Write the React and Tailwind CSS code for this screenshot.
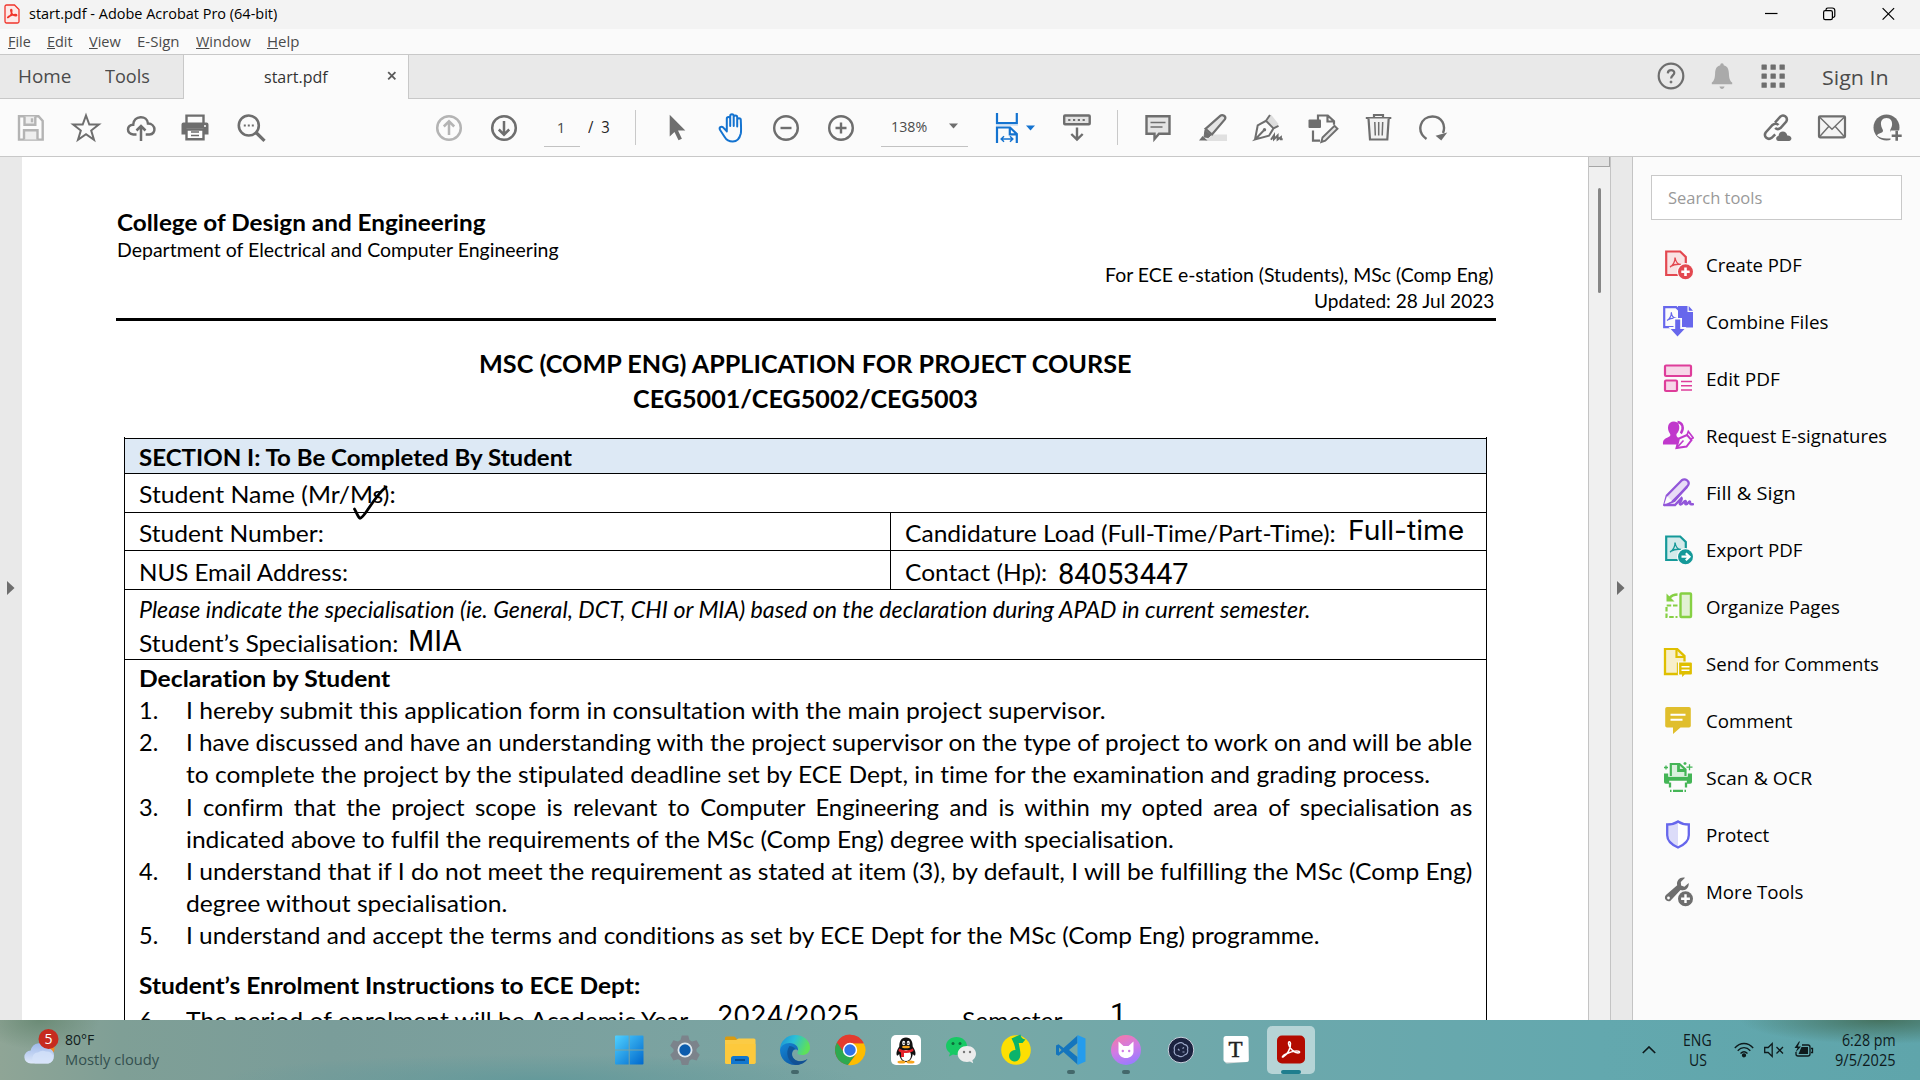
import React, { useLayoutEffect, useRef, useState } from "react";

/* Stretches one line of text to the width of its box. */
function Fit({ className = "", children }) {
  const outer = useRef(null);
  const inner = useRef(null);
  const [scale, setScale] = useState(1);
  useLayoutEffect(() => {
    const w = outer.current.getBoundingClientRect().width;
    const n = inner.current.offsetWidth;
    if (n) setScale(w / n);
  }, []);
  return (
    <span ref={outer} className={"block shrink-0 whitespace-nowrap text-left " + className}>
      <span ref={inner} className="inline-block origin-left" style={{ transform: `scaleX(${scale})` }}>
        {children}
      </span>
    </span>
  );
}

const G = "#6e6e6e";

function Ic({ children, size = 32, className = "", ...rest }) {
  return (
    <svg width={size} height={size} viewBox="0 0 32 32" fill="none" stroke={G} strokeWidth="2.2" className={"shrink-0 " + className} {...rest}>
      {children}
    </svg>
  );
}

function Slot({ children, className = "w-[55px]" }) {
  return <div className={"flex shrink-0 items-center justify-center " + className}>{children}</div>;
}

/* ---------- Window chrome ---------- */

function TitleBar() {
  return (
    <div className="flex h-[29px] shrink-0 items-center bg-[#f3f3f3]">
      <svg width="16" height="20" viewBox="0 0 16 20" className="mb-0.5 ml-1" fill="none" stroke="#f0352b">
        <path d="M2.5 1h8L15 5.5v12a1.5 1.5 0 0 1-1.5 1.5h-11A1.5 1.5 0 0 1 1 17.500v-15A1.500 1.500 0 0 1 2.500 1Z" strokeWidth="1.300" fill="#fde9e8" />
        <path d="M4 13.500c2-1 4-4 3.800-7-.1-1.400-1.200-1.200-1 .1.400 2.400 2.400 4.800 4.800 5.200 1.500.1 1.400-1.300-.2-1.300-2.400 0-4.600.8-6.800 2-.9.600-1.200 1.300-.6 1Z" strokeWidth="1.500" />
      </svg>
      <Fit className="mb-0.5 ml-[9px] w-[248px] text-[15px] leading-[27px] text-black">start.pdf - Adobe Acrobat Pro (64-bit)</Fit>
      <div className="ml-auto flex items-center pr-[25px] pb-0.5">
        <svg width="130" height="14" viewBox="0 0 130 14" fill="none" stroke="#000" strokeWidth="1.200">
          <path d="M0 6.500h12.500" />
          <rect x="58.600" y="3.600" width="8.800" height="9" rx="1.600" />
          <path d="M61 3.400V2.800A1.800 1.800 0 0 1 62.800 1h4.400a2.600 2.600 0 0 1 2.600 2.600v5a1.800 1.800 0 0 1-1.800 1.800" />
          <path d="M117.600 1.200l11.500 11.500M129.100 1.200L117.600 12.700" />
        </svg>
      </div>
    </div>
  );
}

function MenuBar() {
  return (
    <div className="flex h-[25px] shrink-0 items-center bg-[#fafafa] text-[15px] leading-[25px] text-[#4a4a4a]">
      <Fit className="ml-2 w-[23px]"><u>F</u>ile</Fit>
      <Fit className="ml-4 w-[26px]"><u>E</u>dit</Fit>
      <Fit className="ml-4 w-8"><u>V</u>iew</Fit>
      <Fit className="ml-4 w-[43px]">E-Sign</Fit>
      <Fit className="ml-4 w-[55px]"><u>W</u>indow</Fit>
      <Fit className="ml-4 w-8"><u>H</u>elp</Fit>
    </div>
  );
}

function TabRow() {
  return (
    <div className="flex h-[45px] shrink-0 border-t border-[#c8c8c8] bg-[#e9e9e9] text-[#4b4b4b]">
      <div className="flex w-[183px] items-center border-b border-[#c8c8c8] pb-0.5 text-[18.5px]">
        <Fit className="ml-[18px] w-[53px]">Home</Fit>
        <Fit className="ml-[34px] w-[45px]">Tools</Fit>
      </div>
      <div className="flex w-[226px] items-center border-x border-[#c8c8c8] bg-[#fbfbfb] pb-0.5">
        <Fit className="ml-20 w-16 pt-0.5 text-[17px] text-[#333]">start.pdf</Fit>
        <svg width="10" height="10" viewBox="0 0 10 10" className="ml-[59px]" stroke="#5a5a5a" strokeWidth="1.800">
          <path d="M1.200 1.200l7.200 7.200M8.400 1.200L1.200 8.400" />
        </svg>
      </div>
      <div className="flex flex-1 items-center justify-end border-b border-[#c8c8c8] pb-0.5">
        <svg width="28" height="28" viewBox="0 0 28 28" fill="none" stroke={G} strokeWidth="2.200">
          <circle cx="14" cy="14" r="12.300" />
          <path d="M10.800 11.300c.3-4.300 6.600-4 6.500-.4-.1 2.400-3.200 2.600-3.200 5.600" />
          <circle cx="14" cy="20" r="1" fill={G} strokeWidth="1" />
        </svg>
        <svg width="24" height="28" viewBox="0 0 24 28" className="ml-[25px]" fill="#aaaaaa">
          <path d="M12 1.200c1.200 0 1.700.8 1.700 2 3.500.8 5 3.500 5.200 8 .2 5.500 1.100 7.600 3.300 9.300v1.800H1.800v-1.800c2.200-1.700 3.100-3.800 3.300-9.300.2-4.500 1.700-7.200 5.200-8 0-1.200.5-2 1.700-2ZM9.500 24.500h5c-.3 1.500-1.200 2.400-2.500 2.400s-2.200-.9-2.500-2.400Z" />
        </svg>
        <svg width="24" height="24" viewBox="0 0 24 24" className="ml-[27px]" fill={G}>
          {[0, 9, 18].map((y) => [0, 9, 18].map((x) => <rect key={x + "-" + y} x={x + 0.5} y={y + 0.5} width="5.300" height="5.300" rx=".6" />))}
        </svg>
        <Fit className="mr-[31px] ml-[37px] w-[67px] pt-[5px] text-[19.500px]">Sign In</Fit>
      </div>
    </div>
  );
}

/* ---------- Toolbar ---------- */

function Divider() {
  return <div className="h-[35px] w-px shrink-0 bg-[#c9c9c9]" />;
}

function Caret({ color = G }) {
  return (
    <svg width="9" height="6" viewBox="0 0 9 6" fill={color} className="shrink-0">
      <path d="M0 .5h9L4.500 5.500Z" />
    </svg>
  );
}

function Toolbar() {
  return (
    <div className="flex h-[58px] shrink-0 items-center border-b border-[#c8c8c8] bg-[#fbfbfb]">
      <Slot className="ml-[3px] w-[55px]">
        <Ic stroke="#b4b4b4" strokeWidth="2.400">
          <path d="M4 4.200h19.500L27.700 9v18.600H4Z" fill="#fbfbfb" />
          <path d="M9.500 4.500v8.300h10.800V4.500M9 27.500V18.300h13.500v9.200" fill="#eee" />
          <path d="M17 6.300v4" />
        </Ic>
      </Slot>
      <Slot>
        <Ic strokeWidth="2">
          <path d="M16 3.500l3.300 9h9.500l-7.600 6 2.800 9.300L16 22.200l-8 5.600 2.800-9.300-7.600-6h9.500Z" />
        </Ic>
      </Slot>
      <Slot>
        <Ic strokeWidth="2.500">
          <path d="M11.500 22.500H8.300C1 22 1.500 12.500 8.200 12.700 8.500 3 22.500 2.700 23 11.600c8 .2 8.600 10.400 1.500 10.900h-3.800" />
          <path d="M16 29V14.500M11.500 18.500L16 14l4.500 4.500" />
        </Ic>
      </Slot>
      <Slot className="ml-[-1px] w-[55px]">
        <Ic strokeWidth="2.400">
          <path d="M7.500 12V3.600h17V12" />
          <path d="M2.500 12.500a2 2 0 0 1 2-2h23a2 2 0 0 1 2 2v10h-5v-6h-17v6h-5Z" fill={G} stroke="none" />
          <path d="M7.500 17.500v9.800h17v-9.800Z" fill="#fff" />
          <path d="M12 20h8M12 23.500h8" strokeWidth="1.300" />
          <circle cx="26" cy="14" r="1" fill="#fff" stroke="none" />
        </Ic>
      </Slot>
      <Slot className="ml-px w-[55px]">
        <Ic strokeWidth="2.600">
          <circle cx="13.800" cy="13.500" r="10" />
          <path d="M21 20.500l8.500 8.300" strokeWidth="3.200" />
          <path d="M8.800 13.500h2M12.800 13.500h2M16.800 13.500h2" strokeWidth="2" />
        </Ic>
      </Slot>
      <Slot className="ml-[143.500px] w-[55px]">
        <Ic stroke="#b4b4b4" strokeWidth="2.500">
          <circle cx="16" cy="16" r="11.800" />
          <path d="M16 23V9.500M10.800 14.500L16 9.300l5.200 5.200" />
        </Ic>
      </Slot>
      <Slot>
        <Ic strokeWidth="2.500">
          <circle cx="16" cy="16" r="11.800" />
          <path d="M16 9v13.500M10.800 17.500L16 22.700l5.200-5.200" />
        </Ic>
      </Slot>
      <div className="mt-[6px] ml-[12.500px] flex h-8 w-9 shrink-0 justify-center border-b border-[#c2c2c2] pr-0.5 text-[15px] leading-[24px] text-[#4b4b4b]">1</div>
      <Fit className="ml-2 w-[22px] text-[15.500px] text-[#222]">/&nbsp; 3</Fit>
      <div className="w-[25px] shrink-0" />
      <Divider />
      <Slot className="ml-[13.500px] w-[55px]">
        <Ic>
          <path d="M8.700 2.800v21.700l4.800-4.600 4 8.300 3.400-1.500-3.900-8.100h7.300Z" fill={G} stroke="none" />
        </Ic>
      </Slot>
      <Slot>
        <Ic stroke="#1473d0" strokeWidth="2" strokeLinejoin="round" strokeLinecap="round">
          <path d="M9.300 19.500V6.800c0-2.400 3.400-2.400 3.400 0V14 4.200c0-2.500 3.500-2.500 3.500 0V14 5.200c0-2.400 3.500-2.400 3.500 0V14.500 8c0-2.400 3.600-2.400 3.600 0 .1 4 .6 10.500 0 13.500-1.200 5.200-4 8-8 8-4 0-6.500-1.700-8.300-4.800L2.600 18c-1.400-2.500 1-4.300 3.200-2.400l3.500 3.600" transform="translate(1.500 0)" />
        </Ic>
      </Slot>
      <Slot className="ml-[-1px] w-[55px]">
        <Ic strokeWidth="2.400">
          <circle cx="16" cy="16" r="11.800" />
          <path d="M10.500 16h11" />
        </Ic>
      </Slot>
      <Slot>
        <Ic strokeWidth="2.400">
          <circle cx="16" cy="16" r="11.800" />
          <path d="M10.500 16h11M16 10.500v11" />
        </Ic>
      </Slot>
      <div className="mt-[6px] ml-3 flex h-8 w-[87px] shrink-0 items-center border-b border-[#c2c2c2] pb-2">
        <Fit className="ml-[10px] w-9 text-[15px] leading-[22px] text-[#4b4b4b]">138%</Fit>
        <div className="ml-[22px]"><Caret /></div>
      </div>
      <div className="ml-[23px] flex shrink-0 items-center">
        <Ic stroke="#1473d0" strokeWidth="2.200">
          <path d="M6 1v10.200h19.800V1" />
          <path d="M6 31V15.500h13l6.800 6.500v9M18.800 15.500v6.800h7" />
          <path d="M10.500 27h11M13 24.300L10.200 27l2.800 2.700M19 24.300l2.800 2.700-2.800 2.700" strokeWidth="1.500" />
          <path d="M5 13.300h22" stroke="#cfe0f3" strokeWidth="1" />
        </Ic>
        <div className="ml-[3px]"><Caret color="#1473d0" /></div>
      </div>
      <Slot className="ml-[14.500px] w-[55px]">
        <Ic strokeWidth="2.400">
          <rect x="3.200" y="3.500" width="25.500" height="8.800" rx=".8" fill="#e4e4e4" />
          <path d="M7.200 8h2.200M12 8h2.200M16.800 8H19M21.600 8h2.200" strokeWidth="2" />
          <path d="M16 15.500v12M10.300 22l5.700 5.600 5.700-5.600" />
        </Ic>
      </Slot>
      <div className="ml-[13px]"><Divider /></div>
      <Slot className="ml-[12.500px] w-[55px]">
        <Ic strokeWidth="2.400">
          <path d="M4.500 4.200h23v17.500H17l-4.500 5.300v-5.300h-8Z" fill="#e4e4e4" />
          <path d="M8.500 10.500h15M8.500 15h12" strokeWidth="1.400" />
        </Ic>
      </Slot>
      <Slot>
        <Ic>
          <path d="M12 22.500h18V29H8Z" fill="#e0e0e0" stroke="none" />
          <path d="M8.500 16.800L23.500 3.700c2-1.800 6 .8 4.500 3.500L15 22.500Z" fill="#e4e4e4" />
          <path d="M8 18l6 5-2.500 2.500-4.500-.5Z" fill={G} strokeWidth="1" />
          <path d="M2 28.500l3.500-4.500 5 4.500Z" fill={G} stroke="none" />
        </Ic>
      </Slot>
      <Slot>
        <Ic strokeWidth="2">
          <path d="M15 9L19 2.500l7.500 9.500-4 4Z" fill="#dedede" stroke="none" />
          <path d="M3 27.500l2.700-14L14 8.800l7.500 7.500L17 23.700 3 27.500l8.500-8.700M14 8.800l4-5.800M21.500 16.300l5-2.500" />
          <circle cx="12.500" cy="17.800" r="1.700" fill={G} stroke="none" />
          <path d="M19 27.800l3-4.500v3.800l3.600-3.600v4l3.300-2.300v2h1.800" strokeWidth="2" />
        </Ic>
      </Slot>
      <Slot>
        <Ic>
          <path d="M11 8V3.500h9.800l6.200 5.800v3.500M20.500 3.500v6h6.500" />
          <rect x="1.500" y="7.500" width="12.500" height="8.500" rx="1" fill={G} stroke="none" />
          <path d="M6 18.500v10.200h7" />
          <path d="M15.500 25.500L27.500 13.800l3 3-12.200 11.900-4 1.300Z" fill="#e4e4e4" strokeWidth="1.900" />
        </Ic>
      </Slot>
      <Slot className="ml-px w-[55px]">
        <Ic>
          <path d="M2.800 6h25.500M11 6V3h9v3" />
          <path d="M5.500 6.500l1.500 21h17.300l1.400-21" fill="#f2f2f2" />
          <path d="M11.800 10l.5 13.500M15.700 10v13.500M19.700 10l-.5 13.500" strokeWidth="1.500" />
        </Ic>
      </Slot>
      <Slot className="ml-[-1px] w-[55px]">
        <Ic strokeWidth="2.400">
          <path d="M9.500 27C-1.500 19 3.500 4.500 15.500 4.500c9.500 0 13.500 9 10.500 16.500" />
          <path d="M30.500 21.500L18.500 23l5 5.500Z" fill={G} stroke="none" transform="rotate(-8 24 23)" />
        </Ic>
      </Slot>
      <div className="ml-auto flex pr-[5.500px]">
        <Slot>
          <Ic strokeWidth="2.500">
            <path d="M14 10.500l5.300-5.800c3-3 8.200.5 6 4.800L19.500 16c-1.800 1.500-4 1.200-5.300-.2M17.500 13c-1.500-1.800-4.200-1.700-6 0l-6.800 7.500c-2.500 4 2.200 8.200 6 5.300l3.500-3.500" />
            <path d="M17.500 29c-3-.3-3.300-4.500 0-5 .3-5.500 7.800-6 8.800-.5 4.800-.2 5.500 5 1.700 5.500Z" fill={G} stroke="none" />
          </Ic>
        </Slot>
        <Slot>
          <Ic>
            <rect x="3" y="4.300" width="26" height="21" rx="1" fill="#f4f4f4" />
            <path d="M3.500 5L16 17.300 28.500 5M3.500 24.800l9-10M28.500 24.800l-9-10" strokeWidth="1.400" />
          </Ic>
        </Slot>
        <Slot>
          <Ic>
            <circle cx="15.500" cy="15.500" r="13" fill={G} stroke="none" />
            <path d="M15.500 6c4.300 0 5.800 3 5.600 6.500-.2 3-1.700 4.500-2 6 0 1.800 1.200 2.200 3.200 3 1.500.6 2.500 1.500 2.800 3-2.500 1.800-5.500 2-9.600 2s-7-1-9.500-3c.5-1.200 1.500-1.700 3-2.200 2-.7 3-1.200 3-2.800-.3-1.500-1.800-3-2-6C9.700 9 11.200 6 15.500 6Z" fill="#fbfbfb" stroke="none" />
            <path d="M19.500 18.500h13V32h-13Z" fill="#fbfbfb" stroke="none" />
            <path d="M25.700 18.800v10M20.700 23.800h10" strokeWidth="2.600" />
          </Ic>
        </Slot>
      </div>
    </div>
  );
}

/* ---------- Document ---------- */

function Item({ n, children }) {
  return (
    <div className="flex">
      <Fit className="w-[19px]">{n}</Fit>
      <div className="ml-[28px]">{children}</div>
    </div>
  );
}

function Page() {
  return (
    <div className="relative flex h-full w-[1566px] shrink-0 flex-col overflow-hidden bg-white pl-[94px] font-['Lato',sans-serif] text-black [font-variant-ligatures:none]">
      <Fit className="mt-[50px] ml-px h-[30px] w-[369px] text-[22.800px] leading-[31px] font-bold">College of Design and Engineering</Fit>
      <Fit className="mt-px ml-px h-6 w-[442px] text-[18.800px] leading-6">Department of Electrical and Computer Engineering</Fit>
      <div className="mt-px flex w-[1378px] flex-col items-end gap-[2px] text-[18.800px] leading-6">
        <Fit className="h-6 w-[389px]">For ECE e-station (Students), MSc (Comp Eng)</Fit>
        <Fit className="h-6 w-[180px]">Updated: 28 Jul 2023</Fit>
      </div>
      <div className="mt-[5px] h-[3px] w-[1380px] shrink-0 bg-black" />
      <div className="mt-[25px] flex w-[1379px] flex-col items-center text-[24.500px] leading-[36px] font-bold">
        <Fit className="h-[35px] w-[653px]">MSC (COMP ENG) APPLICATION FOR PROJECT COURSE</Fit>
        <Fit className="h-[35px] w-[345px]">CEG5001/CEG5002/CEG5003</Fit>
      </div>
      <div className="mt-[21px] ml-2 flex w-[1363px] flex-1 shrink-0 flex-col border-x border-black pt-px text-[22.300px] leading-8">
        <div className="h-[35px] shrink-0 border-t border-black bg-[#dde9f5] pt-[3px] pl-[14px] font-bold">
          <Fit className="w-[433px]">SECTION I: To Be Completed By Student</Fit>
        </div>
        <div className="h-[39px] shrink-0 border-t border-black pt-[5px] pl-[14px]">
          <Fit className="w-[257px]">Student Name (Mr/Ms):</Fit>
        </div>
        <div className="flex h-[38px] shrink-0 border-t border-black">
          <div className="w-[765px] pt-[5px] pl-[14px]"><Fit className="w-[185px]">Student Number:</Fit></div>
          <div className="flex flex-1 border-l border-black pt-[5px] pl-[14px]">
            <Fit className="w-[431px]">Candidature Load (Full-Time/Part-Time):</Fit>
            <Fit className="mt-[-3px] ml-[12px] w-[116px] font-['Inter'] text-[27px]">Full-time</Fit>
          </div>
        </div>
        <div className="flex h-[39px] shrink-0 border-t border-black">
          <div className="w-[765px] pt-[6px] pl-[14px]"><Fit className="w-[209px]">NUS Email Address:</Fit></div>
          <div className="flex flex-1 border-l border-black pt-[6px] pl-[14px]">
            <Fit className="w-[142px]">Contact (Hp):</Fit>
            <Fit className="mt-px ml-[11px] w-[131px] font-['Roboto'] text-[29.500px]">84053447</Fit>
          </div>
        </div>
        <div className="h-[70px] shrink-0 border-t border-black pt-1 pl-[14px]">
          <Fit className="w-[1171px] italic">Please indicate the specialisation (ie. General, DCT, CHI or MIA) based on the declaration during APAD in current semester.</Fit>
          <div className="mt-[2px] flex">
            <Fit className="w-[260px]">Student’s Specialisation:</Fit>
            <Fit className="mt-[-3px] ml-[9px] w-[54px] font-['Inter'] text-[28px]">MIA</Fit>
          </div>
        </div>
        <div className="min-h-0 flex-1 border-t border-black pt-[3px] pl-[14px]">
          <Fit className="w-[251px] font-bold">Declaration by Student</Fit>
          <Item n="1.">
            <Fit className="w-[919px]">I hereby submit this application form in consultation with the main project supervisor.</Fit>
          </Item>
          <Item n="2.">
            <Fit className="w-[1286px]">I have discussed and have an understanding with the project supervisor on the type of project to work on and will be able</Fit>
            <Fit className="w-[1244px]">to complete the project by the stipulated deadline set by ECE Dept, in time for the examination and grading process.</Fit>
          </Item>
          <div className="h-px" />
          <Item n="3.">
            <Fit className="h-8 w-[1286px] [word-spacing:4px]">I confirm that the project scope is relevant to Computer Engineering and is within my opted area of specialisation as</Fit>
            <Fit className="w-[988px]">indicated above to fulfil the requirements of the MSc (Comp Eng) degree with specialisation.</Fit>
          </Item>
          <Item n="4.">
            <Fit className="w-[1286px]">I understand that if I do not meet the requirement as stated at item (3), by default, I will be fulfilling the MSc (Comp Eng)</Fit>
            <Fit className="w-[321px]">degree without specialisation.</Fit>
          </Item>
          <Item n="5.">
            <Fit className="w-[1133px]">I understand and accept the terms and conditions as set by ECE Dept for the MSc (Comp Eng) programme.</Fit>
          </Item>
          <Fit className="mt-[18px] w-[501px] font-bold">Student’s Enrolment Instructions to ECE Dept:</Fit>
          <div className="mt-[3px] flex h-8">
            <Fit className="w-[19px]">6.</Fit>
            <Fit className="ml-[28px] w-[502px]">The period of enrolment will be Academic Year</Fit>
            <Fit className="mt-[-5px] ml-[29px] w-[142px] font-['Inter'] text-[27px]">2024/2025</Fit>
            <Fit className="ml-[103px] w-[100px]">Semester</Fit>
            <div className="mt-[-7px] ml-[48px] font-['Roboto'] text-[29px]">1</div>
          </div>
        </div>
      </div>
      {/* Hand-drawn tick over the title choice */}
      <svg width="36" height="36" viewBox="0 0 36 36" className="absolute top-[328px] left-[330px]" fill="none" stroke="#000" strokeWidth="2.800" strokeLinecap="round" strokeLinejoin="round">
        <path d="M2.500 24c1.500 2 3.500 8.500 5.500 9.300 4.500 0 12.500-20 26-31.300" />
      </svg>
    </div>
  );
}

/* ---------- Tools panel ---------- */

const Acro = ({ c, t }) => (
  <path transform={t} d="M0 10c3-1.500 5.500-6 5-9.500M5 .5c.5 4 3 7 6 7-3-.7-7 0-10.500 2" stroke={c} strokeWidth="1.400" fill="none" />
);

const TOOLS = [
  ["Create PDF", "w-[96px]", (
    <>
      <path d="M4.200 2.500h14l5.600 5.500v18H4.200Z" stroke="#e34850" fill="#f9e3e4" />
      <Acro c="#e34850" t="translate(8 8)" />
      <circle cx="23.500" cy="22.700" r="8.600" fill="#fbfbfb" stroke="none" />
      <circle cx="23.500" cy="22.700" r="7.500" fill="#e34850" stroke="none" />
      <path d="M23.500 18.500v8.400M19.300 22.700h8.400" stroke="#fff" strokeWidth="2.600" />
    </>
  )],
  ["Combine Files", "w-[123px]", (
    <>
      <path d="M2.200 1.200h12l4 4v16H2.200Z" stroke="#6767ec" fill="#fbfbfb" />
      <Acro c="#6767ec" t="translate(5 6) scale(.85)" />
      <path d="M16 0h9.500v6H31v15.500H16Z M26.700 0L31 4.700h-4.300Z" fill="#6767ec" stroke="none" />
      <path d="M11.500 12h8.500v9h4.500L15.500 31 6.500 21h5Z" fill="#fbfbfb" stroke="none" />
      <path d="M13.200 13.500h5V23h4.300l-7 7.500L8.700 23h4.500Z" fill="#6767ec" stroke="none" />
    </>
  )],
  ["Edit PDF", "w-[74px]", (
    <>
      <rect x="3" y="2.500" width="26" height="10.500" rx="1" stroke="#de3d9a" fill="#f7d6e8" />
      <rect x="3" y="17.500" width="12" height="10.500" rx="1" stroke="#de3d9a" fill="#f7d6e8" />
      <path d="M19 18.500h11M19 22.700h11M19 27h11" stroke="#de3d9a" strokeWidth="1.500" />
    </>
  )],
  ["Request E-signatures", "w-[181px]", (
    <>
      <path d="M12 1.500c7 0 6.300 9.500 2.500 12.500-.5 3 1.500 3.500 3.500 4.500L15 24.500H1c-.3-5 1.500-5.500 5.500-7.500 2.200-1 2.200-2 1.500-3.300C4.500 9 5.500 1.500 12 1.500Z" fill="#c038cc" stroke="none" />
      <path d="M15.500 2c5 .5 7 6 3.300 11.500" stroke="#c038cc" strokeWidth="2.400" />
      <path d="M14.500 28l2.500-9.500 8-3.500 4.500 5-5 6.500Z" fill="#fbfbfb" stroke="#c038cc" strokeWidth="2" />
      <path d="M14.500 28l7-7.500M25 15l1.300-3.500 5 6.500-3 1" stroke="#c038cc" strokeWidth="1.600" />
    </>
  )],
  ["Fill & Sign", "w-[90px]", (
    <>
      <path d="M2.300 28l2.500-9.500L19.800 3.300c3.500-2.500 8.500 1 6.300 5L12.300 24l-10 4Z" stroke="#9256d9" fill="#e8dcf6" strokeWidth="2.300" strokeLinejoin="round" />
      <path d="M5 19l5 5-8 4Z" fill="#fbfbfb" stroke="none" />
      <path d="M2.500 28H13l6.500-7c1.500 2-3.500 5.500-1 6.500 2 .3 3.500-4 5-3.500 1.300.5-1.500 3 .5 3.300 2 .2 2.500-3.200 3.800-2.800 1 .5-.7 2.500 1.200 2.700h2M24.500 10.500L11 24" stroke="#9256d9" strokeWidth="2.400" strokeLinecap="round" />
    </>
  )],
  ["Export PDF", "w-[96px]", (
    <>
      <path d="M4.200 2.500h14l5.600 5.500v18H4.200Z" stroke="#159999" fill="#d3eaea" />
      <Acro c="#159999" t="translate(8 8)" />
      <circle cx="23.500" cy="22.700" r="8.600" fill="#fbfbfb" stroke="none" />
      <circle cx="23.500" cy="22.700" r="7.500" fill="#159999" stroke="none" />
      <path d="M19.500 22.700h7M23.800 19.200l3.700 3.500-3.700 3.500" stroke="#fff" strokeWidth="2.200" />
    </>
  )],
  ["Organize Pages", "w-[134px]", (
    <>
      <rect x="18.500" y="2.500" width="10.500" height="23.500" rx=".8" stroke="#86d044" fill="#e2f1d4" strokeWidth="2.400" />
      <path d="M15.500 3.500c-4 0-6 1-8 3.500" stroke="#86d044" strokeWidth="2.600" />
      <path d="M4.500 2.500v8h8Z" fill="#86d044" stroke="none" />
      <path d="M15.500 14.500H4.500V26h11" stroke="#86d044" strokeDasharray="4.500 1.800" />
    </>
  )],
  ["Send for Comments", "w-[173px]", (
    <>
      <path d="M3 .9h12l7.500 7.200v7.500H16V26H3Z" stroke="#dfbf00" fill="#f7efcb" strokeWidth="2.300" />
      <path d="M14.500 1v8H22" stroke="#dfbf00" />
      <path d="M16.500 14H29a1.500 1.500 0 0 1 1.500 1.500v10A1.500 1.500 0 0 1 29 27h-6l-3.500 3.500V27h-3Z" fill="#dfbf00" stroke="#fbfbfb" strokeWidth="1.200" />
      <path d="M19.500 18.700h8M19.500 22.300h8" stroke="#fff" strokeWidth="1.600" />
    </>
  )],
  ["Comment", "w-[86px]", (
    <>
      <path d="M5 2h22a1.800 1.800 0 0 1 1.800 1.800v17A1.800 1.800 0 0 1 27 22.600h-8.500L11 29v-6.400H5a1.800 1.800 0 0 1-1.800-1.800v-17A1.800 1.800 0 0 1 5 2Z" fill="#e0be2c" stroke="none" />
      <path d="M8.500 9.700h15M8.500 14.700h12" stroke="#fff" strokeWidth="2" />
    </>
  )],
  ["Scan & OCR", "w-[106px]", (
    <>
      <path d="M8.800 14V2h8.700l6 5.500V14" stroke="#44b556" fill="#daf0dd" strokeWidth="2.200" />
      <path d="M16.500 2v6.500h7" stroke="#44b556" strokeWidth="2.800" />
      <path d="M2 11.500h4.200v3.300h19.600v-3.300H30V20a1.800 1.800 0 0 1-1.800 1.800h-3.400v-3H7.200v3H3.800A1.800 1.800 0 0 1 2 20Z" fill="#44b556" stroke="none" />
      <path d="M8 20.500v5M8 28.800h1.500M11 28.800h10M22.500 28.800H24M24 25.500v-5" stroke="#44b556" strokeWidth="2.300" />
      <path d="M4 3.500v4M2 5.500h4M27.500 2.200v6M24.500 5.200h6M23 0v3M21.500 1.500h3" stroke="#44b556" strokeWidth="1.300" />
    </>
  )],
  ["Protect", "w-[63px]", (
    <>
      <path d="M16 2.500c3 2 6.500 3 10.800 3v10.800c0 6-4.500 9.500-10.800 12.200-6.300-2.700-10.800-6.200-10.800-12.200V5.500c4.300 0 7.800-1 10.800-3Z" fill="#fff" stroke="none" />
      <path d="M16 2.500v26C9.700 25.800 5.200 22.300 5.200 16.300V5.500c4.300 0 7.800-1 10.800-3Z" fill="#dcdcf9" stroke="none" />
      <path d="M16 2.500c3 2 6.500 3 10.800 3v10.800c0 6-4.500 9.500-10.800 12.200-6.300-2.700-10.800-6.200-10.800-12.200V5.500c4.300 0 7.800-1 10.800-3Z" stroke="#6767ec" strokeWidth="2.300" />
    </>
  )],
  ["More Tools", "w-[97px]", (
    <>
      <path d="M23 1.800c-4.500-1.300-9 2.500-7.800 7.500L4.200 18.800c-3 3-.2 7.500 4 6.200l10.300-11c4.500 1.700 8.700-2 8.200-7l-4.300 3.700-3.300-1.200-.3-3.500Z" fill={G} stroke="none" />
      <circle cx="6.500" cy="22" r="1.400" fill="#fff" stroke="none" />
      <circle cx="23.500" cy="22.700" r="8.600" fill="#fbfbfb" stroke="none" />
      <circle cx="23.500" cy="22.700" r="7.500" fill={G} stroke="none" />
      <path d="M23.500 18.300v8.800M19.100 22.700h8.800" stroke="#fff" strokeWidth="2.400" />
    </>
  )],
];

function ToolsPanel() {
  return (
    <div className="flex flex-1 flex-col bg-[#fbfbfb]">
      <div className="mt-[18px] ml-[18px] flex h-[45px] w-[251px] shrink-0 items-center border border-[#c9c9c9] bg-white">
        <Fit className="mt-0.5 ml-4 w-[94px] text-[16.500px] text-[#999]">Search tools</Fit>
      </div>
      <div className="mt-4 flex flex-col">
        {TOOLS.map(([name, w, icon]) => (
          <div key={name} className="flex h-[57px] items-center pl-[29px] text-[18.500px] text-black">
            <Ic strokeWidth="2.200">{icon}</Ic>
            <Fit className={"ml-3 " + w}>{name}</Fit>
          </div>
        ))}
      </div>
    </div>
  );
}

/* ---------- Taskbar ---------- */

function TaskIcon({ children, dot, active }) {
  return (
    <div className="flex w-[55.100px] shrink-0 justify-center">
      <div className={"relative flex h-12 w-12 items-center justify-center rounded-[5px] " + (active ? "bg-white/50" : "")}>
        <svg width="32" height="32" viewBox="0 0 32 32" fill="none">{children}</svg>
        {dot && <span className="absolute bottom-0 left-5 h-1 w-2 rounded-full bg-[#44686b]" />}
        {active && <span className="absolute bottom-0 left-[14px] h-1 w-5 rounded-full bg-[#1f7e8e]" />}
      </div>
    </div>
  );
}

function Taskbar() {
  return (
    <div className="relative flex h-[60px] shrink-0 items-center bg-[linear-gradient(90deg,#8fa596_0px,#7f9f96_120px,#7a9d9a_330px,#7ba2a0_640px,#78a8a6_960px,#6ca8ac_1280px,#63a8ae_1600px,#5fa5ab_1920px)]">
      <div className="absolute inset-0 bg-[radial-gradient(ellipse_140px_24px_at_1880px_0px,#3f664ecc,transparent),radial-gradient(ellipse_60px_30px_at_40px_0px,#5c7f66aa,transparent),radial-gradient(ellipse_320px_26px_at_540px_60px,#5f989acc,transparent)]" />
      <div className="relative flex w-[602.500px] shrink-0 items-center pl-6">
        <svg width="38" height="40" viewBox="0 0 38 40" className="mb-0.5 shrink-0">
          <defs>
            <linearGradient id="cl" x1="0" y1="0" x2="0" y2="1"><stop offset="0" stopColor="#9db8ea" /><stop offset="1" stopColor="#dfe9fa" /></linearGradient>
          </defs>
          <circle cx="24" cy="20" r="6.500" fill="#f08a24" />
          <path d="M7 34.500a6.500 6.500 0 0 1-.3-13A9.300 9.300 0 0 1 24 19a8 8 0 0 1 0 15.500Z" fill="url(#cl)" />
          <path d="M11 34.500a6 6 0 0 1 3-11 8 8 0 0 1 8-1 6.200 6.200 0 0 1 3 12Z" fill="#d6e3f9" opacity=".75" />
          <circle cx="24.500" cy="10" r="10" fill="#c62b1f" />
          <text x="24.500" y="15" textAnchor="middle" fontSize="14" fill="#fff" fontFamily="Open Sans">5</text>
        </svg>
        <div className="mb-0.5 ml-[2.500px] flex flex-col text-[15px] leading-[20px]">
          <Fit className="w-[29px] text-[#101c1c]">80°F</Fit>
          <Fit className="w-[94px] text-[#34504f]">Mostly cloudy</Fit>
        </div>
      </div>
      <div className="relative flex shrink-0">
        <TaskIcon>
          <defs><linearGradient id="wn" x1="0" y1="0" x2="1" y2="1"><stop offset="0" stopColor="#4fd0ff" /><stop offset="1" stopColor="#0068cc" /></linearGradient></defs>
          <path d="M2 1.500h12.700v14H1v-13a1 1 0 0 1 1-1ZM15.700 1.500h12.800a1 1 0 0 1 1 1v13H15.700ZM1 16.500h13.700v14H2a1 1 0 0 1-1-1ZM15.700 16.500H29.500v13a1 1 0 0 1-1 1H15.700Z" fill="url(#wn)" />
        </TaskIcon>
        <TaskIcon>
          <path d="M12.800 1.500h6.400l1.300 4.500 2.500 1.400 4.600-1.200 3.200 5.600-3.300 3.200v2.600l3.300 3.200-3.200 5.600-4.600-1.200-2.500 1.400-1.300 4.400h-6.400l-1.300-4.400L9 25.200l-4.600 1.200-3.200-5.600 3.300-3.200V15l-3.300-3.200 3.200-5.600L9 7.400 11.500 6Z" fill="#7c838b" />
          <circle cx="16" cy="16" r="7.500" fill="#dfe9ef" />
          <circle cx="16" cy="16" r="5.700" fill="#0b5cad" />
        </TaskIcon>
        <TaskIcon>
          <path d="M1 4a1.500 1.500 0 0 1 1.500-1.500h8L14 6H1Z" fill="#d99b10" />
          <path d="M1 6h11l2.500-1.500H30A1.500 1.500 0 0 1 31.500 6v23H1Z" fill="#fbcb45" />
          <path d="M1 10h30.500v18.500a1.500 1.500 0 0 1-1.500 1.500H2.500A1.500 1.500 0 0 1 1 28.500Z" fill="#fdc93c" />
          <path d="M7 24.500a2.500 2.500 0 0 1 2.500-2.500h13a2.500 2.500 0 0 1 2.500 2.500V30H7Z" fill="#1277cf" />
          <path d="M11 26h10" stroke="#0a3f77" strokeWidth="1.500" />
        </TaskIcon>
        <TaskIcon dot>
          <defs>
            <linearGradient id="e1" x1="0" y1="0" x2="1" y2=".3"><stop offset="0" stopColor="#1b8fd6" /><stop offset=".5" stopColor="#2bbfd6" /><stop offset="1" stopColor="#5ee05a" /></linearGradient>
            <linearGradient id="e2" x1="0" y1="0" x2="1" y2="1"><stop offset="0" stopColor="#1488d8" /><stop offset="1" stopColor="#0c4a94" /></linearGradient>
          </defs>
          <path d="M1 16C1 7 8 1 16 1c9 0 15 6 15 12.500 0 5-3.500 7.500-8 7.500-3.500 0-5-1-4.500-2.500 3-4-1-9-7-9C6 9.500 2 12 1 16Z" fill="url(#e1)" />
          <path d="M1 16c.5-4 4.500-7 9.500-7 6 0 9 4 8.500 7.500-1-2-6-1.500-6 3.500 0 7 9 9.500 15.500 5C25.500 29 21 31 16 31 7.500 31 1 24.500 1 16Z" fill="url(#e2)" />
          <path d="M10.500 12c-4.500 6-2 16 6.500 19 5 0 9-2.300 11.500-6-6.500 4.500-15.500 2-15.500-5 0-3 1.500-4.500 3-5.200C14.500 13 12.500 12 10.500 12Z" fill="#124e8f" opacity=".75" />
        </TaskIcon>
        <TaskIcon>
          <circle cx="16" cy="16" r="15" fill="#e33b2e" />
          <path d="M3 8.500A15 15 0 0 0 14 30.900L22.500 19.500 16 16H9.500Z" fill="#2da94f" />
          <path d="M14 30.900A15 15 0 0 0 29.800 9.300H16l6.500 10.500Z" fill="#fdbd00" />
          <path d="M3 8.500A15 15 0 0 1 29.800 9.300H16a7 7 0 0 0-6.500 8.500Z" fill="#e33b2e" />
          <circle cx="16" cy="16" r="7.200" fill="#fff" />
          <circle cx="16" cy="16" r="5.700" fill="#2e73e8" />
        </TaskIcon>
        <TaskIcon>
          <rect x="1" y="1" width="30" height="30" rx="5" fill="#fff" />
          <path d="M16 3.500c5 0 6.700 4 6.700 9 2.300 3 3.600 7 2.300 9-.8.500-1.500-.7-2.200-1.500C22 25.500 19 28 16 28s-6-2.500-6.800-8c-.7.800-1.400 2-2.200 1.500-1.300-2 0-6 2.300-9 0-5 1.700-9 6.700-9Z" fill="#111" />
          <ellipse cx="16" cy="21.500" rx="5" ry="5.500" fill="#fff" />
          <ellipse cx="13.700" cy="9" rx="1.500" ry="2.200" fill="#fff" /><ellipse cx="18.300" cy="9" rx="1.500" ry="2.200" fill="#fff" />
          <circle cx="14" cy="9.300" r=".7" fill="#111" /><circle cx="18" cy="9.300" r=".7" fill="#111" />
          <ellipse cx="16" cy="13" rx="4" ry="1.300" fill="#f7a51c" />
          <path d="M9 14.500c4.500 2.500 9.500 2.500 14 0l.5 2.500c-3 1.700-6 2-9.500 2v4h-3v-4.500L8.500 17Z" fill="#e5232b" />
          <ellipse cx="11.500" cy="28" rx="4" ry="1.500" fill="#f7a51c" /><ellipse cx="20.500" cy="28" rx="4" ry="1.500" fill="#f7a51c" />
        </TaskIcon>
        <TaskIcon>
          <path d="M11.500 3C5.500 3 1 7 1 12c0 3 1.500 5.300 4 7l-1 3.500 4-2c5 1.500 14-1.500 14-8.500 0-5-4.500-9-10.500-9Z" fill="#17c964" />
          <path d="M22 12c-5.200 0-9.300 3.500-9.300 8s4.100 8 9.300 8c1 0 2-.2 3-.5l3.200 1.700-.8-3c2.200-1.500 3.600-3.700 3.600-6.200 0-4.500-3.800-8-9-8Z" fill="#ececec" />
          <circle cx="8" cy="9.500" r="1.500" fill="#0c6d3a" /><circle cx="15" cy="9.500" r="1.500" fill="#0c6d3a" />
          <circle cx="19" cy="18" r="1.200" fill="#777" /><circle cx="25" cy="18" r="1.200" fill="#777" />
        </TaskIcon>
        <TaskIcon>
          <circle cx="16" cy="16" r="14.800" fill="#fddf03" />
          <path d="M11.500 4.500l9-4c.3 3 2 4.500 5 5l-3 3.500h-3.800c.8 4.500 2 9 1.700 12.500-.5 4.500-4 6.500-6.500 6-4-.7-5.800-4.500-4.300-8 1.200-2.700 3.700-3.800 5.900-3.600C15 12 13.500 8 11.500 4.500Z" fill="#0bb36b" />
        </TaskIcon>
        <TaskIcon dot>
          <path d="M22.500 1.500L8.500 14 3.500 10.200 1 11.500v9l2.500 1.300L8.500 18l14 12.500V23L14 16l8.500-7Z" fill="#1475bd" />
          <path d="M4 13.500v5l2.600-2.500Z" fill="#76a8a8" />
          <path d="M22.500 1l8 3.500v23l-8 3.500Z" fill="#259cec" />
        </TaskIcon>
        <TaskIcon dot>
          <defs><linearGradient id="ct" x1=".2" y1="0" x2=".6" y2="1"><stop offset="0" stopColor="#f47aa8" /><stop offset=".5" stopColor="#cf7be6" /><stop offset="1" stopColor="#9a7bff" /></linearGradient></defs>
          <circle cx="16" cy="16" r="15" fill="url(#ct)" />
          <path d="M8.500 7.500l5 4.500h5l5-4.500v10c0 4-3.500 6.500-7.500 6.500s-7.500-2.500-7.500-6.500Z" fill="#fff" />
          <circle cx="12.800" cy="17" r="1.200" fill="#cf7be6" /><circle cx="19.200" cy="17" r="1.200" fill="#cf7be6" />
        </TaskIcon>
        <TaskIcon>
          <circle cx="16" cy="16" r="12.800" fill="#1c2340" stroke="#c8d0dc" strokeWidth="1" />
          <path d="M13 9.500c2-1.500 5-1 6 .8 3 .2 4.500 3 3.500 5.200 1 2.500-.5 5-3 5.500-1.500 2-5 2-6.500.5-3 0-4.500-3-3.500-5.500-1-3 .8-5.800 3.500-6.500Z" stroke="#9aa6c6" strokeWidth="1.200" />
          <path d="M13 15l1.500 1.500M17.500 18h2M19 13.500l-1.500 1" stroke="#9aa6c6" strokeWidth="1.200" />
        </TaskIcon>
        <TaskIcon>
          <path d="M5 4l21-1.500a2 2 0 0 1 2 2L29 26a2 2 0 0 1-2 2l-20 1.500a2 2 0 0 1-2-2Z" fill="#d9dddd" />
          <rect x="3.500" y="2" width="25" height="26" rx="2.500" fill="#fff" />
          <text x="15.500" y="22.500" textAnchor="middle" fontSize="23" fill="#222" stroke="#222" strokeWidth=".5" fontFamily="Liberation Serif">T</text>
        </TaskIcon>
        <TaskIcon active>
          <rect x="2" y="1.500" width="28" height="28" rx="5" fill="#b30b00" />
          <path d="M8 23c4-2 8-8.500 7.500-13.500-.3-2.500-2.300-2-2 .3.700 4 5 8.700 9.500 9.200 2.500 0 2-2-.5-2-4-.2-8.500 1.500-12.500 3.500-2.200 1.200-3.500 3-2 2.500Z" stroke="#fff" strokeWidth="1.500" />
        </TaskIcon>
      </div>
      <div className="relative ml-auto flex items-center pr-[24px] text-[15.500px] text-[#0e1a1c]">
        <svg width="14" height="8" viewBox="0 0 14 8" fill="none" stroke="currentColor" strokeWidth="1.700"><path d="M.8 7L7 1l6.200 6" /></svg>
        <div className="ml-[27px] flex flex-col items-center leading-[20px]">
          <Fit className="w-[29px]">ENG</Fit>
          <Fit className="w-[18px]">US</Fit>
        </div>
        <svg width="80" height="18" viewBox="0 0 80 18" className="ml-[22px]" fill="none" stroke="currentColor" strokeWidth="1.300">
          <path d="M.8 7c5.200-6 13.200-6 18.400 0M3.700 9.700c3.700-4 8.900-4 12.600 0M6.500 12.500c2.200-2.200 4.800-2.200 7 0" />
          <circle cx="10" cy="14.300" r="1.500" fill="currentColor" />
          <path d="M30.700 6.500h3.500l4-4v13l-4-4h-3.500ZM42.500 6l6.500 6.500M49 6l-6.500 6.500" />
          <path d="M68 4h6a2 2 0 0 1 2 2v7a2 2 0 0 1-2 2H64a2 2 0 0 1-2-2v-2M77 7.500h1.500v4H77" />
          <path d="M67.500 6H74v7H64.500Z" fill="currentColor" stroke="none" />
          <path d="M65 .5L60.500 7h3l-2 4.500L67 5.500h-3.200L66 .5Z" fill="currentColor" stroke="none" />
        </svg>
        <div className="ml-[21px] flex flex-col items-end leading-[20px]">
          <Fit className="w-[54px]">6:28 pm</Fit>
          <Fit className="w-[61px]">9/5/2025</Fit>
        </div>
      </div>
    </div>
  );
}

function SideArrow() {
  return (
    <svg width="8" height="14" viewBox="0 0 8 14" fill={G}><path d="M0 0l7.500 7L0 14Z" /></svg>
  );
}

export default function App() {
  return (
    <div className="flex h-[1080px] w-[1920px] flex-col overflow-hidden bg-white font-['Open_Sans',sans-serif]">
      <TitleBar />
      <MenuBar />
      <TabRow />
      <Toolbar />
      <div className="flex min-h-0 flex-1">
        <div className="flex w-[22px] shrink-0 justify-start bg-[#e9e9e9] pt-[424px] pl-[7px]"><SideArrow /></div>
        <Page />
        <div className="flex w-[22px] shrink-0 flex-col border-l border-[#c4c4c4] bg-[#f0f0f0]">
          <div className="h-[10px] shrink-0 border-r border-b border-[#a5a5a5] bg-[#e3e3e3]" />
          <div className="mt-[21px] ml-[9px] h-[105px] w-[3px] rounded-full bg-[#868686]" />
        </div>
        <div className="flex w-[23px] shrink-0 border-x border-[#c4c4c4] bg-[#e9e9e9] pt-[424px] pl-[6px]"><SideArrow /></div>
        <ToolsPanel />
      </div>
      <Taskbar />
    </div>
  );
}
